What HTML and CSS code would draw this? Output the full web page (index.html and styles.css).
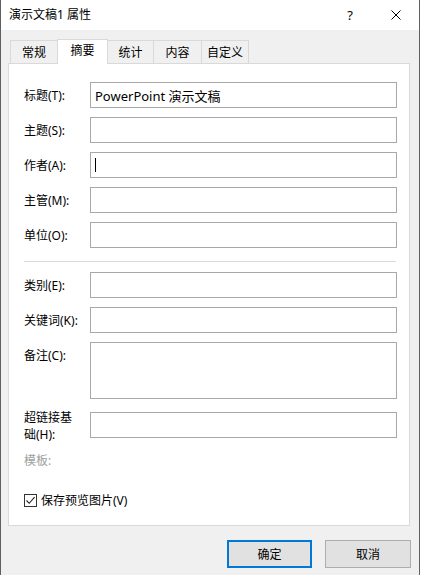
FILE: index.html
```html
<!DOCTYPE html>
<html lang="zh-CN">
<head>
    <meta charset="UTF-8">
    <meta name="viewport" content="width=device-width, initial-scale=1.0">
    <title>演示文稿1 属性</title>
    <link rel="stylesheet" href="styles.css">
</head>
<body>

    <div class="window">
        <div class="titlebar">
            <span class="title">演示文稿1 属性</span>
            <span class="caption-btn help">?</span>
            <span class="caption-btn close">
                <svg width="10" height="10" viewBox="0 0 10 10">
                    <path d="M0.5 0.5 L9.5 9.5 M9.5 0.5 L0.5 9.5" stroke="#000" stroke-width="1" fill="none"/>
                </svg>
            </span>
        </div>

        <div class="body">
            <div class="tabs">
                <div class="tab t1">常规</div>
                <div class="tab t2 active">摘要</div>
                <div class="tab t3">统计</div>
                <div class="tab t4">内容</div>
                <div class="tab t5">自定义</div>
            </div>

            <div class="panel">
                <div class="row">
                    <label>标题(T):</label>
                    <div class="field">PowerPoint 演示文稿</div>
                </div>
                <div class="row">
                    <label>主题(S):</label>
                    <div class="field"></div>
                </div>
                <div class="row">
                    <label>作者(A):</label>
                    <div class="field"><span class="caret"></span></div>
                </div>
                <div class="row">
                    <label>主管(M):</label>
                    <div class="field"></div>
                </div>
                <div class="row">
                    <label>单位(O):</label>
                    <div class="field"></div>
                </div>

                <div class="separator"></div>

                <div class="row">
                    <label>类别(E):</label>
                    <div class="field"></div>
                </div>
                <div class="row">
                    <label>关键词(K):</label>
                    <div class="field"></div>
                </div>
                <div class="row tall">
                    <label>备注(C):</label>
                    <div class="field"></div>
                </div>
                <div class="row link">
                    <label>超链接基础(H):</label>
                    <div class="field"></div>
                </div>

                <div class="template">模板:</div>

                <div class="check-row">
                    <span class="checkbox">
                        <svg width="11" height="11" viewBox="0 0 11 11">
                            <path d="M1.5 5.5 L4.2 8.3 L9.6 2.2" stroke="#222" stroke-width="1.1" fill="none"/>
                        </svg>
                    </span>
                    <span>保存预览图片(V)</span>
                </div>
            </div>

            <div class="buttons">
                <button class="btn primary">确定</button>
                <button class="btn">取消</button>
            </div>
        </div>
    </div>

</body>
</html>
```

FILE: styles.css
```css
body {
    margin: 0;
    padding: 0;
    width: 422px;
    height: 575px;
    background-color: #ffffff;
    font-family: "Noto Sans", "Noto Sans CJK SC", sans-serif;
    font-size: 12px;
    color: #000;
    overflow: hidden;
}
.window {
    width: 418px;
    height: 575px;
    border-left: 1px solid #5f5f5f;
    border-right: 1px solid #5f5f5f;
    display: flex;
    flex-direction: column;
}
.titlebar {
    height: 30px;
    background-color: #ffffff;
    display: flex;
    align-items: center;
    flex-shrink: 0;
}
.title {
    flex: 1;
    padding-left: 8px;
    font-size: 12px;
    line-height: 16px;
}
.caption-btn {
    width: 46px;
    height: 30px;
    display: flex;
    justify-content: center;
    align-items: center;
}
.help {
    font-size: 13px;
}
.body {
    flex: 1;
    background-color: #f0f0f0;
    padding-top: 10px;
}
.tabs {
    display: flex;
    padding-left: 9px;
    height: 23px;
}
.tab {
    border: 1px solid #d9d9d9;
    border-bottom: none;
    margin-left: -1px;
    display: flex;
    align-items: center;
    justify-content: center;
    box-sizing: border-box;
    height: 23px;
    line-height: 16px;
    padding-top: 1px;
}
.t1 { width: 48px; margin-left: 0; }
.t2 { width: 51px; }
.t3 { width: 47px; }
.t4 { width: 49px; }
.t5 { width: 48px; }
.tab.active {
    background-color: #ffffff;
    height: 25px;
    margin-top: -1px;
    padding-top: 0;
    padding-bottom: 3px;
    position: relative;
    z-index: 1;
}
.panel {
    margin-left: 7px;
    border: 1px solid #d9d9d9;
    background-color: #ffffff;
    padding: 18px 12px 0 15px;
    width: 373px;
    height: 443px;
}
.row {
    display: flex;
    align-items: center;
    margin-bottom: 9px;
}
.row label {
    width: 66px;
    flex-shrink: 0;
    line-height: 17px;
}
.field {
    border: 1px solid #a8a8a8;
    background-color: #ffffff;
    display: flex;
    align-items: center;
    padding-left: 4px;
    box-sizing: border-box;
    width: 307px;
    height: 26px;
    font-size: 13px;
}
.caret {
    width: 1px;
    height: 14px;
    background-color: #000;
}
.row.tall {
    align-items: flex-start;
    margin-bottom: 13px;
}
.row.tall label {
    margin-top: 5px;
}
.row.tall .field {
    height: 57px;
}
.row.link {
    align-items: flex-start;
    height: 26px;
}
.row.link label {
    width: 58px;
    margin-right: 8px;
    margin-top: -3px;
}
.separator {
    height: 1px;
    width: 372px;
    background-color: #dadada;
    margin: 13px 0 10px 0;
}
.template {
    color: #a0a0a0;
    line-height: 17px;
    margin-top: 14px;
}
.check-row {
    display: flex;
    align-items: center;
    margin-top: 23px;
    line-height: 17px;
}
.checkbox {
    width: 11px;
    height: 11px;
    border: 1px solid #333;
    margin-right: 4px;
    display: flex;
}
.buttons {
    display: flex;
    justify-content: flex-end;
    gap: 13px;
    padding-right: 8px;
    margin-top: 14px;
}
.btn {
    width: 86px;
    height: 28px;
    background-color: #e1e1e1;
    border: 1px solid #adadad;
    font-family: "Noto Sans", "Noto Sans CJK SC", sans-serif;
    font-size: 12px;
    color: #000;
    padding: 0;
}
.btn.primary {
    width: 85px;
    border: 2px solid #0078d7;
}
```
